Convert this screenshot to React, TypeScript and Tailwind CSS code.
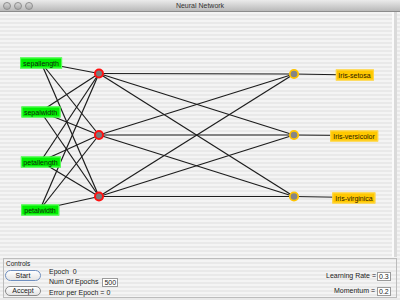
import React from "react";

const inputs = [
  { name: "sepallength", x: 41, y: 62.5 },
  { name: "sepalwidth", x: 40.5, y: 111.5 },
  { name: "petallength", x: 40.5, y: 161.5 },
  { name: "petalwidth", x: 40, y: 209.5 },
];
const hidden = [
  { x: 99, y: 73.5 },
  { x: 99, y: 135 },
  { x: 99, y: 196.5 },
];
const outputs = [
  { name: "Iris-setosa", x: 294, y: 74, lx: 354.5, ly: 75 },
  { name: "Iris-versicolor", x: 294, y: 135, lx: 354, ly: 135.5 },
  { name: "Iris-virginica", x: 294, y: 196.5, lx: 354, ly: 197.5 },
];
const TOP = 12;

export default function App() {
  return (
    <div className="w-[400px] h-[300px] overflow-hidden flex flex-col font-['Liberation_Sans',Arial,sans-serif] text-[#1a1a1a] bg-[repeating-linear-gradient(180deg,#f4f4f4_0px,#f4f4f4_2px,#e9e9e9_2px,#e9e9e9_4px)]">
      {/* title bar */}
      <div className="h-[12px] shrink-0 grid grid-cols-[60px_1fr_60px] items-center bg-gradient-to-b from-[#ebebeb] to-[#b9b9b9] border-b border-[#8c8c8c]">
        <div className="flex items-center gap-[3px] pl-[3px]">
          <span className="w-[8px] h-[8px] rounded-full bg-gradient-to-b from-[#d8d8d8] to-[#a8a8a8] border border-[#8e8e8e]" />
          <span className="w-[8px] h-[8px] rounded-full bg-gradient-to-b from-[#d8d8d8] to-[#a8a8a8] border border-[#8e8e8e]" />
          <span className="w-[8px] h-[8px] rounded-full bg-gradient-to-b from-[#d8d8d8] to-[#a8a8a8] border border-[#8e8e8e]" />
        </div>
        <div className="text-center text-[7px] leading-[11px] text-[#333]">Neural Network</div>
        <div />
      </div>

      {/* canvas */}
      <div className="h-[245px] shrink-0 flex">
        <div className="relative w-[392px] h-full">
          <svg className="absolute inset-0" width="392" height="245" viewBox={`0 ${TOP} 392 245`}>
            {inputs.map((i, a) =>
              hidden.map((h, b) => (
                <line key={`ih${a}${b}`} x1={i.x} y1={i.y} x2={h.x} y2={h.y} stroke="#1c1c1c" strokeWidth="1.2" />
              ))
            )}
            {hidden.map((h, a) =>
              outputs.map((o, b) => (
                <line key={`ho${a}${b}`} x1={h.x} y1={h.y} x2={o.x} y2={o.y} stroke="#1c1c1c" strokeWidth="1.2" />
              ))
            )}
            {outputs.map((o, a) => (
              <line key={`ol${a}`} x1={o.x} y1={o.y} x2={o.lx} y2={o.ly} stroke="#1c1c1c" strokeWidth="1.2" />
            ))}
            {hidden.map((h, a) => (
              <circle key={`hc${a}`} cx={h.x} cy={h.y} r="4" fill="#7a7a7a" stroke="#ff1010" strokeWidth="2" />
            ))}
            {outputs.map((o, a) => (
              <circle key={`oc${a}`} cx={o.x} cy={o.y} r="4.2" fill="#858585" stroke="#ffc400" strokeWidth="1.8" />
            ))}
          </svg>
          {inputs.map((i) => (
            <div
              key={i.name}
              className="absolute -translate-x-1/2 -translate-y-1/2 h-[11px] px-[2px] bg-[#00f000] border border-[#60ff60] text-[7px] leading-[9px] text-[#102010] whitespace-nowrap"
              style={{ left: i.x, top: i.y - TOP }}
            >
              {i.name}
            </div>
          ))}
          {outputs.map((o) => (
            <div
              key={o.name}
              className="absolute -translate-x-1/2 -translate-y-1/2 h-[11px] px-[2px] bg-[#ffc800] border border-[#ffd84a] text-[7px] leading-[9px] text-[#2a1a00] whitespace-nowrap"
              style={{ left: o.lx, top: o.ly - TOP }}
            >
              {o.name}
            </div>
          ))}
        </div>
        <div className="w-[2px] h-full bg-[#fbfbfb]" />
        <div className="w-[3px] h-full bg-[#dadada]" />
      </div>

      {/* controls */}
      <div className="mt-[1px] mx-[3px] h-[40px] shrink-0 border border-[#bcbcbc] flex flex-col">
        <div className="text-[6.5px] leading-[7px] pl-[2px] mt-[1px] text-[#222]">Controls</div>
        <div className="flex items-start">
          <div className="flex flex-col gap-[5px] pt-[3px] pl-[1px]">
            <div className="w-[36px] h-[11px] rounded-full border border-[#6f8fbf] bg-gradient-to-b from-[#ffffff] to-[#e4e4e4] text-center text-[7px] leading-[9px]">Start</div>
            <div className="w-[36px] h-[10px] rounded-full border border-[#8a8a8a] bg-gradient-to-b from-[#ffffff] to-[#e4e4e4] text-center text-[7px] leading-[8px]">Accept</div>
          </div>
          <div className="flex flex-col pl-[8px] text-[7px] text-[#222]">
            <div className="h-[10px] leading-[10px]">Epoch&nbsp;&nbsp;0</div>
            <div className="h-[11px] flex items-center gap-[4px]">
              <span>Num Of Epochs</span>
              <span className="h-[9px] w-[16px] bg-white border border-[#9a9a9a] leading-[7px] pl-[1px]">500</span>
            </div>
            <div className="h-[10px] leading-[10px]">Error per Epoch = 0</div>
          </div>
          <div className="flex-1" />
          <div className="flex flex-col items-end gap-[6px] pt-[5px] pr-[5px] text-[7px] text-[#222]">
            <div className="h-[9px] flex items-center gap-[1px]">
              <span>Learning Rate =</span>
              <span className="h-[9px] w-[14px] bg-white border border-[#9a9a9a] leading-[7px] pl-[1px]">0.3</span>
            </div>
            <div className="h-[9px] flex items-center gap-[2px]">
              <span>Momentum =</span>
              <span className="h-[9px] w-[14px] bg-white border border-[#9a9a9a] leading-[7px] pl-[1px]">0.2</span>
            </div>
          </div>
        </div>
      </div>
    </div>
  );
}
